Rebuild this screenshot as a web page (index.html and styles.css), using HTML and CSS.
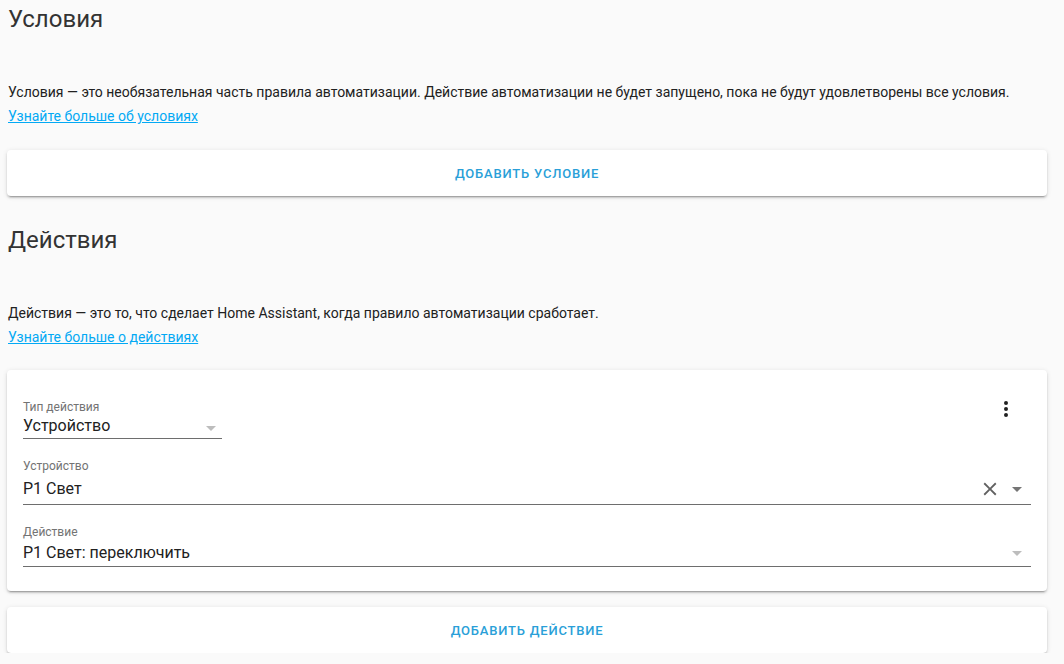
FILE: index.html
```html
<!DOCTYPE html>
<html lang="ru">
<head>
<meta charset="utf-8">
<link rel="stylesheet" href="styles.css">
</head>
<body>
<div class="page">
  <section class="section">
    <h2 class="title">Условия</h2>
    <p class="desc">Условия — это необязательная часть правила автоматизации. Действие автоматизации не будет запущено, пока не будут удовлетворены все условия.</p>
    <a class="more" href="#">Узнайте больше об условиях</a>
    <div class="card button-card"><span class="btn">Добавить условие</span></div>
  </section>
  <section class="section second">
    <h2 class="title">Действия</h2>
    <p class="desc">Действия — это то, что сделает Home Assistant, когда правило автоматизации сработает.</p>
    <a class="more" href="#">Узнайте больше о действиях</a>
    <div class="card action-card">
      <div class="row-top">
        <div class="field field-type">
          <div class="label">Тип действия</div>
          <div class="value-row">
            <span class="value">Устройство</span>
            <span class="arrow light"></span>
          </div>
        </div>
        <div class="menu">
          <svg width="24" height="24" viewBox="0 0 24 24"><path fill="#212121" d="M12 16a2 2 0 1 1 0 4 2 2 0 0 1 0-4zm0-6a2 2 0 1 1 0 4 2 2 0 0 1 0-4zm0-6a2 2 0 1 1 0 4 2 2 0 0 1 0-4z"/></svg>
        </div>
      </div>
      <div class="field field-device">
        <div class="label">Устройство</div>
        <div class="value-row">
          <span class="value">P1 Свет</span>
          <svg class="clear" width="22" height="22" viewBox="0 0 24 24"><path fill="#616161" d="M19 6.41 17.59 5 12 10.59 6.41 5 5 6.41 10.59 12 5 17.59 6.41 19 12 13.41 17.59 19 19 17.59 13.41 12z"/></svg>
          <span class="arrow dark"></span>
        </div>
      </div>
      <div class="field field-action">
        <div class="label">Действие</div>
        <div class="value-row">
          <span class="value">P1 Свет: переключить</span>
          <span class="arrow light"></span>
        </div>
      </div>
    </div>
    <div class="card button-card last"><span class="btn">Добавить действие</span></div>
  </section>
</div>
</body>
</html>
```
FILE: styles.css
```css
html, body {
  margin: 0;
  padding: 0;
  background: #fafafa;
  font-family: Roboto, "Noto Sans", Arial, sans-serif;
  color: #212121;
}
.page {
  width: 1040px;
  padding: 3px 0 0 7px;
}
.section {
  display: flex;
  flex-direction: column;
}
.second {
  margin-top: 28px;
}
.title {
  margin: 0 0 0 1px;
  font-size: 24px;
  line-height: 32px;
  font-weight: 400;
  color: #333;
}
.desc {
  margin: 47px 0 0 1px;
  font-size: 14px;
  line-height: 20px;
  color: #212121;
}
.more {
  margin: 4px 0 0 1px;
  font-size: 14px;
  line-height: 20px;
  color: #03a9f4;
  align-self: flex-start;
}
.card {
  background: #fff;
  border-radius: 4px;
  box-shadow: 0 2px 2px 0 rgba(0,0,0,0.14), 0 1px 5px 0 rgba(0,0,0,0.12), 0 3px 1px -2px rgba(0,0,0,0.2);
}
.button-card {
  margin-top: 24px;
  height: 46px;
  display: flex;
  align-items: center;
  justify-content: center;
}
.button-card.last {
  margin-top: 16px;
}
.btn {
  font-size: 13px;
  font-weight: 500;
  letter-spacing: 0.8px;
  text-transform: uppercase;
  color: #2a9fd8;
}
.action-card {
  margin-top: 23px;
  height: 221px;
  padding: 0 16px 0 16px;
  box-sizing: border-box;
}
.row-top {
  display: flex;
  justify-content: space-between;
  align-items: flex-start;
}
.field {
  display: flex;
  flex-direction: column;
}
.field-type {
  width: 199px;
  padding-top: 30px;
}
.field-type .value-row {
  padding-bottom: 0;
}
.field-device {
  margin-top: 20px;
}
.field-device .value-row {
  padding-top: 4px;
  padding-bottom: 3px;
}
.field-action {
  margin-top: 20px;
}
.field-action .value-row {
  padding-top: 2px;
  padding-bottom: 1px;
}
.label {
  font-size: 12px;
  line-height: 14px;
  color: #737373;
}
.value-row {
  display: flex;
  align-items: center;
  height: 24px;
  border-bottom: 1px solid #6e6e6e;
  padding-bottom: 1px;
}
.value {
  flex: 1;
  font-size: 16px;
  line-height: 24px;
  color: #212121;
}
.arrow {
  width: 0;
  height: 0;
  border-left: 5px solid transparent;
  border-right: 5px solid transparent;
  border-top: 5px solid #757575;
  margin-right: 9px;
}
.arrow.light {
  border-top-color: #bdbdbd;
}
.field-type .arrow {
  margin-right: 6px;
  margin-top: 4px;
}
.clear {
  margin-right: 11px;
}
.menu {
  margin-top: 27px;
  margin-right: 13px;
  width: 24px;
  height: 24px;
}
.menu svg {
  display: block;
}
```
